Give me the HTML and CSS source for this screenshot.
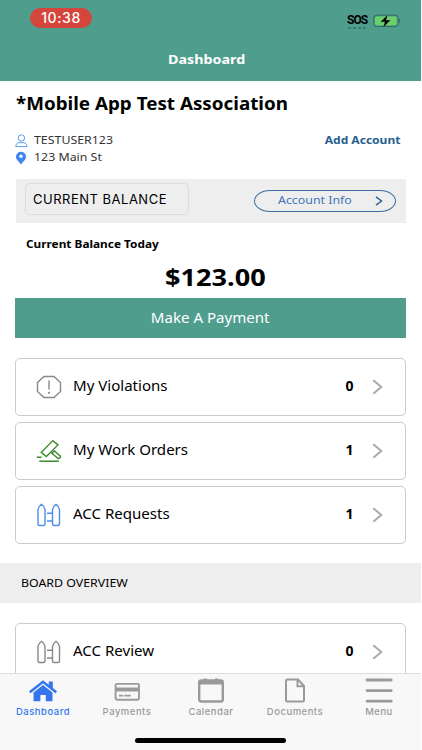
FILE: index.html
```
<!DOCTYPE html>
<html lang="en">
<head>
    <meta charset="UTF-8">
    <meta name="viewport" content="width=device-width, initial-scale=1.0">
    <title>Dashboard</title>
    <link rel="stylesheet" href="styles.css">
</head>
<body>

<div class="phone">
    <header>
        <div class="status-bar">
            <span class="clock">10:38</span>
            <div class="signal">
                <div class="sos">
                    <span class="sos-text">SOS</span>
                    <div class="dots"><i></i><i></i><i></i><i></i></div>
                </div>
                <svg class="battery" width="28" height="14" viewBox="0 0 28 14">
                    <rect x="0.7" y="1.2" width="24.4" height="11.4" rx="3" fill="#4f9d8d" stroke="#35695e" stroke-width="1"/>
                    <rect x="2" y="2.5" width="21.8" height="8.8" rx="2" fill="#6bd06a"/>
                    <path d="M26 5v4q1.300-.6 1.300-2t-1.300-2z" fill="#35695e"/>
                    <path d="M14.500 1.200L7.600 7.700h4.300l-1.500 5.300 7-6.700h-4.400z" fill="#000"/>
                </svg>
            </div>
        </div>
        <h1><span class="wide">Dashboard</span></h1>
    </header>

    <main>
        <h2><span class="wide">*Mobile App Test Association</span></h2>

        <section class="account">
            <div class="account-details">
                <div class="account-row">
                    <svg width="13" height="14" viewBox="0 0 13 14" fill="none" stroke="#5b9bf0" stroke-width="1">
                        <circle cx="6.400" cy="4" r="3.200"/>
                        <path d="M.8 12.600c0-2.600 1.400-3.900 3.200-3.900h4.800c1.800 0 3.200 1.300 3.200 3.900z" stroke-linejoin="round"/>
                    </svg>
                    <span class="wide">TESTUSER123</span>
                </div>
                <div class="account-row">
                    <svg width="13" height="14" viewBox="0 0 13 14">
                        <path d="M6 .7a5 5 0 0 0-5 5c0 3.200 3.600 5.300 5 7.800 1.400-2.500 5-4.600 5-7.800a5 5 0 0 0-5-5z" fill="#3f86ee"/>
                        <circle cx="6" cy="5.300" r="1.700" fill="#fff"/>
                    </svg>
                    <span class="wide">123 Main St</span>
                </div>
            </div>
            <a class="add-account wide">Add Account</a>
        </section>

        <section class="balance-bar">
            <div class="balance-select"><span>CURRENT BALANCE</span></div>
            <div class="account-info">
                <span class="wide">Account Info</span>
                <svg width="8" height="10" viewBox="0 0 8 10" fill="none" stroke="#2e6396" stroke-width="1.500"><path d="M1 .8l5.500 4.200L1 9.200"/></svg>
            </div>
        </section>

        <p class="balance-label"><span class="wide">Current Balance Today</span></p>
        <p class="amount"><span class="wide">$123.00</span></p>
        <button class="pay"><span class="wide">Make A Payment</span></button>

        <section class="cards">
            <div class="card">
                <svg class="icon gray" viewBox="0 0 26 26">
                    <path d="M8 2.500h10l6.500 6v9L18 23.500H8L1.500 17.500v-9z"/>
                    <path d="M13 6.500v9"/><circle class="dot" cx="13" cy="18.800" r="1.100"/>
                </svg>
                <span class="name wide">My Violations</span>
                <span class="count">0</span>
                <svg class="arrow" viewBox="0 0 11 16"><path d="M1.300 1.300L9.300 8l-8 6.700"/></svg>
            </div>
            <div class="card">
                <svg class="icon green" viewBox="0 0 26 26">
                    <path d="M5.200 14.400L16.800 2.600l5.200 4.300-11.600 11.600z"/>
                    <path d="M15.800 15.200l2.600-2.200 6 5.200q.5 2-2.200 2.400z"/>
                    <path d="M.8 19.300h4.800M3.300 23.300h19.500"/>
                </svg>
                <span class="name wide">My Work Orders</span>
                <span class="count">1</span>
                <svg class="arrow" viewBox="0 0 11 16"><path d="M1.300 1.300L9.300 8l-8 6.700"/></svg>
            </div>
            <div class="card">
                <svg class="icon blue" viewBox="0 0 26 26">
                    <path d="M2 7.500Q2.700 4.300 5.500 2.300 8.300 4.300 9 7.500V22q0 1.500-1.500 1.500h-4Q2 23.500 2 22z"/>
                    <path d="M16.500 7.500Q17.200 4.300 20 2.300q2.800 2 3.500 5.200V22q0 1.500-1.500 1.500h-4q-1.500 0-1.500-1.500z"/>
                    <path d="M11 11.200h5.500M11 19h5.500"/>
                </svg>
                <span class="name wide">ACC Requests</span>
                <span class="count">1</span>
                <svg class="arrow" viewBox="0 0 11 16"><path d="M1.300 1.300L9.300 8l-8 6.700"/></svg>
            </div>
        </section>

        <h3><span class="wide">BOARD OVERVIEW</span></h3>

        <section class="cards">
            <div class="card">
                <svg class="icon gray" viewBox="0 0 26 26">
                    <path d="M2 7.500Q2.700 4.300 5.500 2.300 8.300 4.300 9 7.500V22q0 1.500-1.500 1.500h-4Q2 23.500 2 22z"/>
                    <path d="M16.500 7.500Q17.200 4.300 20 2.300q2.800 2 3.500 5.200V22q0 1.500-1.500 1.500h-4q-1.500 0-1.500-1.500z"/>
                    <path d="M11 11.200h5.500M11 19h5.500"/>
                </svg>
                <span class="name wide">ACC Review</span>
                <span class="count">0</span>
                <svg class="arrow" viewBox="0 0 11 16"><path d="M1.300 1.300L9.300 8l-8 6.700"/></svg>
            </div>
        </section>
    </main>

    <footer>
        <nav>
            <a class="tab active">
                <svg width="30" height="30" viewBox="0 0 30 30">
                    <path d="M1.800 18.200L15 7.800l13.200 10.400" fill="none" stroke="#3576ef" stroke-width="2.600"/>
                    <path d="M20.800 7.500h4v7.500l-4-3.200z" fill="#3576ef"/>
                    <path d="M5.500 18.500L15 11l9.500 7.500v8.700h-6.700v-6.300h-5.400v6.300H5.500z" fill="#3576ef"/>
                </svg>
                <span>Dashboard</span>
            </a>
            <a class="tab">
                <svg width="30" height="30" viewBox="0 0 30 30">
                    <rect x="3.600" y="9.900" width="23.400" height="15.800" rx="1.500" fill="none" stroke="#9a9a9a" stroke-width="1.900"/>
                    <path d="M3.500 13.400h23.500v4H3.500zM7 20.700h4.200v1.900H7zM12.200 20.700h6.500v1.900h-6.500z" fill="#9a9a9a"/>
                </svg>
                <span>Payments</span>
            </a>
            <a class="tab">
                <svg width="30" height="30" viewBox="0 0 30 30">
                    <rect x="3.200" y="6.500" width="23.600" height="21" rx="2" fill="none" stroke="#9a9a9a" stroke-width="2.400"/>
                    <path d="M3 6h24v4.500H3zM7.500 4.500H11v3H7.500zM19 4.500h3.500v3H19z" fill="#9a9a9a"/>
                </svg>
                <span>Calendar</span>
            </a>
            <a class="tab">
                <svg width="30" height="30" viewBox="0 0 30 30" fill="none" stroke="#9a9a9a" stroke-width="2">
                    <path d="M7.500 5.500h10.500l6 6.500v14q0 1.500-1.500 1.500h-15Q6 27.500 6 26V7q0-1.500 1.500-1.500z"/>
                    <path d="M17.500 5.500v6.700h6.500"/>
                </svg>
                <span>Documents</span>
            </a>
            <a class="tab">
                <svg width="30" height="30" viewBox="0 0 30 30" stroke="#9a9a9a" stroke-width="2.800" stroke-linecap="round">
                    <path d="M3 6h24.200M3 16.600h24.200M3 27.200h24.200"/>
                </svg>
                <span>Menu</span>
            </a>
        </nav>
        <div class="home-indicator"></div>
    </footer>
</div>

</body>
</html>
```
FILE: styles.css
```
* {
    box-sizing: border-box;
}
body {
    margin: 0;
    background-color: #fff;
    font-family: 'Noto Sans', sans-serif;
    color: #000;
}
h1, h2, h3, p {
    margin: 0;
}
svg {
    display: block;
    flex: none;
}
span, a {
    white-space: nowrap;
}
/* slightly extended lettering */
.wide {
    display: inline-block;
    transform: scaleX(1.075);
    transform-origin: left;
}
.phone {
    width: 421px;
    height: 750px;
    overflow: hidden;
    display: flex;
    flex-direction: column;
}

header {
    height: 81px;
    flex: none;
    background-color: #4f9d8d;
}
.status-bar {
    height: 46px;
    padding: 8px 20px 0 30px;
    display: flex;
    justify-content: space-between;
    align-items: flex-start;
}
.clock {
    width: 62px;
    height: 20px;
    border-radius: 10px;
    background-color: #d4463b;
    color: #fff;
    font: 500 14px/20px Inter, sans-serif;
    letter-spacing: 0.6px;
    text-align: center;
}
.signal {
    display: flex;
    gap: 5px;
    padding-top: 6px;
}
.sos {
    height: 16px;
}
.sos-text {
    display: block;
    font: bold 12px/13px Roboto, sans-serif;
    letter-spacing: -0.9px;
    width: 21px;
}
.dots {
    display: flex;
    gap: 2.500px;
    padding: 0 1px;
}
.dots i {
    width: 2.500px;
    height: 2px;
    background-color: #397c6e;
}
h1 {
    color: #fff;
    font-size: 13px;
    line-height: 26px;
    padding-left: 168px;
}
h1 .wide {
    transform: scaleX(1.1);
}

main {
    flex: 1;
    min-height: 0;
    overflow: hidden;
}
h2 {
    padding-left: 16px;
    font-size: 17.500px;
    line-height: 45px;
    height: 46px;
}
.account {
    height: 52px;
    padding: 4px 21px 0 15px;
    display: flex;
    justify-content: space-between;
    align-items: flex-start;
}
.account-row {
    display: flex;
    align-items: center;
    gap: 6px;
    height: 17px;
    font-size: 11.500px;
    color: #333;
}
.account-row svg {
    margin-top: 2px;
}
.add-account {
    color: #27608f;
    font-size: 11.200px;
    font-weight: bold;
    line-height: 17px;
    transform-origin: right;
}

.balance-bar {
    height: 44px;
    margin: 0 15px 0 16px;
    padding: 4px 10px 0 9px;
    background-color: #eee;
    display: flex;
    justify-content: space-between;
    align-items: flex-start;
}
.balance-select {
    width: 164px;
    height: 32px;
    padding-left: 7px;
    border: 1px solid #ddd;
    border-radius: 5px;
    font: 13px/30px Inter, sans-serif;
    letter-spacing: 0.5px;
}
.account-info {
    width: 142px;
    height: 22px;
    margin-top: 7px;
    padding: 0 12px 0 23px;
    border: 1px solid #3a6f9f;
    border-radius: 16px / 11px;
    display: flex;
    align-items: center;
    justify-content: space-between;
    color: #4274b8;
    font-size: 11.500px;
    line-height: 20px;
}
.account-info span {
    padding-bottom: 2px;
}

.balance-label {
    padding-left: 26px;
    font-size: 11px;
    font-weight: bold;
    line-height: 42px;
}
.amount {
    height: 33px;
    padding-left: 165px;
    font-size: 24px;
    font-weight: bold;
    line-height: 24px;
}
.amount .wide {
    transform: scaleX(1.13);
}
.pay {
    display: block;
    width: 391px;
    height: 40px;
    margin: 0 0 20px 15px;
    padding: 0;
    border: 0;
    background-color: #4f9d8d;
    color: #fff;
    font: 14px/38px 'Noto Sans', sans-serif;
}
.pay .wide {
    transform-origin: center;
}

.cards {
    padding: 0 15px;
    display: flex;
    flex-direction: column;
    gap: 6px;
}
.card {
    height: 58px;
    padding: 0 22px 0 20px;
    border: 1px solid #ccc;
    border-radius: 5px;
    display: flex;
    align-items: center;
}
.icon {
    width: 26px;
    height: 26px;
    margin: 0 11px 0 0;
    fill: none;
    stroke-width: 1.400;
}
.gray {
    stroke: #888;
}
.green {
    stroke: #3e8a2d;
}
.blue {
    stroke: #4c8fe8;
}
.dot {
    fill: #888;
    stroke: none;
}
.name {
    font-size: 14px;
    line-height: 20px;
    padding-bottom: 2px;
}
.count {
    width: 9px;
    margin-left: auto;
    margin-right: 18px;
    padding-bottom: 2px;
    font-size: 14px;
    font-weight: bold;
    line-height: 20px;
    text-align: center;
}
.arrow {
    width: 11px;
    height: 16px;
    fill: none;
    stroke: #aaa;
    stroke-width: 2;
}

h3 {
    height: 40px;
    margin: 19px 0 20px;
    padding-left: 21px;
    background-color: #eee;
    font-size: 11.500px;
    font-weight: normal;
    line-height: 39px;
}

footer {
    height: 77px;
    flex: none;
    border-top: 1px solid #ddd;
    background-color: #f8f8f8;
}
nav {
    height: 64px;
    padding-left: 1px;
    display: grid;
    grid-template-columns: repeat(5, 1fr);
}
.tab {
    display: flex;
    flex-direction: column;
    align-items: center;
    color: #9a9a9a;
    font: 500 9.500px/14px Inter, sans-serif;
    letter-spacing: 0.5px;
}
.tab span {
    margin-top: 1px;
}
.active {
    color: #3576ef;
}
.home-indicator {
    width: 151px;
    height: 5px;
    margin-left: 135px;
    border-radius: 3px;
    background-color: #000;
}
```
